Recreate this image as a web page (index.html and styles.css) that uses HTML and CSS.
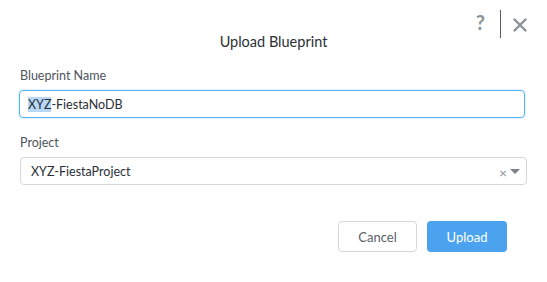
FILE: index.html
```html
<!DOCTYPE html>
<html lang="en">
<head>
    <meta charset="UTF-8">
    <meta name="viewport" content="width=device-width, initial-scale=1.0">
    <title>Upload Blueprint</title>
    <link rel="stylesheet" href="styles.css">
</head>
<body>
<div class="dialog">
    <!-- Шапка -->
    <div class="dialog-header">
        <h3 class="dialog-title">Upload Blueprint</h3>
        <div class="header-tools">
            <span class="help">?</span>
            <span class="divider"></span>
            <svg class="close" width="14" height="14" viewBox="0 0 14 14">
                <path d="M1.5 1.5 L12.5 12.5 M12.5 1.5 L1.5 12.5" stroke="#8a9097" stroke-width="2.4" stroke-linecap="round"/>
            </svg>
        </div>
    </div>

    <!-- Поля -->
    <div class="field">
        <label class="field-label">Blueprint Name</label>
        <div class="text-input focused"><span class="selected">XYZ</span>-FiestaNoDB</div>
    </div>

    <div class="field">
        <label class="field-label">Project</label>
        <div class="text-input select">
            <span>XYZ-FiestaProject</span>
            <span class="select-tools">
                <span class="clear">×</span>
                <span class="arrow"></span>
            </span>
        </div>
    </div>

    <div class="actions">
        <button class="btn btn-secondary">Cancel</button>
        <button class="btn btn-primary">Upload</button>
    </div>
</div>
</body>
</html>
```

FILE: styles.css
```css
:root {
    --color-text: #2a2f36;
    --color-label: #4d545c;
    --color-border: #d4d8dc;
    --color-focus: #5bb2f0;
    --color-primary: #4ba3ef;
    --color-icon: #8a9097;
}

body {
    margin: 0;
    padding: 0;
    background: #ffffff;
    font-family: Lato, "Open Sans", sans-serif;
    color: var(--color-text);
}

.dialog {
    width: 547px;
    height: 282px;
    box-sizing: border-box;
    padding: 0 20px;
}

.dialog-header {
    position: relative;
    height: 68px;
}

.dialog-title {
    margin: 0;
    padding-top: 33px;
    text-align: center;
    font-size: 14.5px;
    font-weight: normal;
    color: var(--color-text);
}

.header-tools {
    position: absolute;
    right: 0;
    top: 10px;
    display: flex;
    align-items: center;
    height: 28px;
}

.help {
    font-size: 20px;
    font-weight: bold;
    color: var(--color-icon);
    margin-right: 15px;
    margin-top: -4px;
}

.divider {
    width: 1px;
    height: 28px;
    background: #555b61;
    margin-right: 12px;
}

.close {
    margin-top: 2px;
}

.field {
    margin-bottom: 17px;
}

.field-label {
    display: block;
    font-size: 12.5px;
    line-height: 15px;
    color: var(--color-label);
    margin-bottom: 7px;
}

.text-input {
    height: 28px;
    box-sizing: border-box;
    border: 1px solid var(--color-border);
    border-radius: 4px;
    padding: 0 10px;
    font-size: 12.5px;
    display: flex;
    align-items: center;
    color: var(--color-text);
}

.text-input.focused {
    margin-left: -1px;
    margin-right: 2px;
    border-color: var(--color-focus);
    box-shadow: 0 0 2px rgba(91, 178, 240, 0.6);
    padding-left: 8px;
}

.selected {
    background: #b8d8f8;
}

.select {
    justify-content: space-between;
    padding-right: 6px;
}

.select-tools {
    display: flex;
    align-items: center;
    gap: 3px;
}

.clear {
    color: #8d9399;
    font-size: 14px;
    margin-top: 2px;
}

.arrow {
    width: 0;
    height: 0;
    border-left: 5px solid transparent;
    border-right: 5px solid transparent;
    border-top: 5px solid #7c8288;
}

.actions {
    display: flex;
    justify-content: flex-end;
    gap: 10px;
    margin-top: 36px;
    padding-right: 20px;
}

.btn {
    height: 31px;
    width: 80px;
    border-radius: 4px;
    font-family: Lato, "Open Sans", sans-serif;
    font-size: 13px;
    cursor: pointer;
}

.btn-secondary {
    background: #ffffff;
    border: 1px solid var(--color-border);
    color: #5a6168;
    width: 79px;
}

.btn-primary {
    background: var(--color-primary);
    border: none;
    color: #ffffff;
}
```
